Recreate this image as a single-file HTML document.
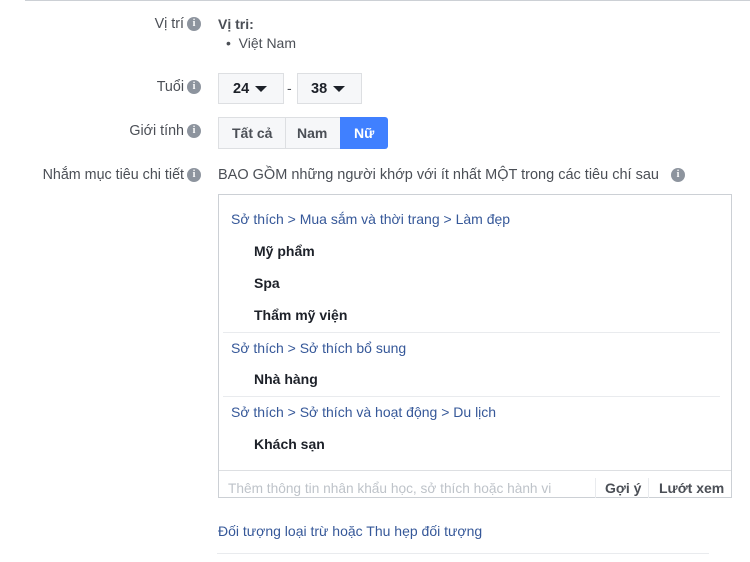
<!DOCTYPE html>
<html><head><meta charset="utf-8"><style>
body{margin:0;width:750px;height:562px;background:#fff;font-family:"Liberation Sans",Arial,sans-serif;font-size:14px;color:#4b4f56;position:relative;overflow:hidden}
.a{position:absolute;white-space:nowrap}
.lbl{position:absolute;right:566px;color:#4b4f56;font-size:14.3px}
.ic{position:absolute;left:187px;width:14px;height:14px;border-radius:50%;background:#8d949e;color:#fff;font-size:10px;font-weight:bold;text-align:center;line-height:14px;font-family:"Liberation Serif",serif}
.box{position:absolute;border:1px solid #dddfe2;background:#f6f7f9;box-sizing:border-box}
.bl{color:#365899}
.b{font-weight:bold;color:#1d2129}
.ar{display:inline-block;width:0;height:0;border-left:6px solid transparent;border-right:6px solid transparent;border-top:6px solid #1d2129;vertical-align:middle;margin-left:6px}
</style></head><body>
<div class="a" style="left:25px;top:0;width:725px;height:1px;background:#ccd0d5"></div>
<div class="lbl" style="top:16px">Vị trí</div><div class="ic" style="top:17px">i</div>
<div class="a b" style="left:218px;top:16px;color:#4b4f56">Vị tri:</div>
<div class="a" style="left:226px;top:35px">•&nbsp; Việt Nam</div>
<div class="lbl" style="top:79px">Tuổi</div><div class="ic" style="top:80px">i</div>
<div class="box" style="left:218px;top:73px;width:66px;height:31px"></div>
<div class="a b" style="left:233px;top:81px;font-size:14.5px">24<span class="ar"></span></div>
<div class="a" style="left:287px;top:80px">-</div>
<div class="box" style="left:297px;top:73px;width:65px;height:31px"></div>
<div class="a b" style="left:311px;top:81px;font-size:14.5px">38<span class="ar"></span></div>
<div class="lbl" style="top:123px">Giới tính</div><div class="ic" style="top:124px">i</div>
<div class="box" style="left:218px;top:117px;width:68px;height:32px"></div>
<div class="box" style="left:285px;top:117px;width:56px;height:32px"></div>
<div class="a" style="left:340px;top:117px;width:48px;height:32px;background:#4080ff;border-radius:0 3px 3px 0"></div>
<div class="a b" style="left:232px;top:125px;color:#4b4f56">Tất cả</div>
<div class="a b" style="left:297px;top:125px;color:#4b4f56">Nam</div>
<div class="a b" style="left:354px;top:125px;color:#fff">Nữ</div>
<div class="lbl" style="top:167px">Nhắm mục tiêu chi tiết</div><div class="ic" style="top:168px">i</div>
<div class="a" style="left:218px;top:167px;font-size:14.5px">BAO GỒM những người khớp với ít nhất MỘT trong các tiêu chí sau</div>
<div class="ic" style="left:671px;top:168px">i</div>
<div class="a" style="left:218px;top:194px;width:514px;height:304px;border:1px solid #ccd0d5;box-sizing:border-box"></div>
<div class="a" style="left:219px;top:470px;width:512px;height:1px;background:#dddfe2"></div>
<div class="a" style="left:223px;top:332px;width:497px;height:1px;background:#e9ebee"></div>
<div class="a" style="left:223px;top:396px;width:497px;height:1px;background:#e9ebee"></div>
<div class="a bl" style="left:231px;top:211px">Sở thích &gt; Mua sắm và thời trang &gt; Làm đẹp</div>
<div class="a b" style="left:254px;top:243px">Mỹ phẩm</div>
<div class="a b" style="left:254px;top:275px">Spa</div>
<div class="a b" style="left:254px;top:307px">Thẩm mỹ viện</div>
<div class="a bl" style="left:231px;top:340px">Sở thích &gt; Sở thích bổ sung</div>
<div class="a b" style="left:254px;top:371px">Nhà hàng</div>
<div class="a bl" style="left:231px;top:404px">Sở thích &gt; Sở thích và hoạt động &gt; Du lịch</div>
<div class="a b" style="left:254px;top:436px">Khách sạn</div>
<div class="a" style="left:228px;top:481px;color:#bec3c9;font-size:13.7px">Thêm thông tin nhân khẩu học, sở thích hoặc hành vi</div>
<div class="a" style="left:595px;top:478px;width:1px;height:20px;background:#e9ebee"></div>
<div class="a" style="left:648px;top:478px;width:1px;height:20px;background:#e9ebee"></div>
<div class="a b" style="left:605px;top:480px;color:#4b4f56">Gợi ý</div>
<div class="a b" style="left:659px;top:480px;color:#4b4f56">Lướt xem</div>
<div class="a bl" style="left:218px;top:523px">Đối tượng loại trừ hoặc Thu hẹp đối tượng</div>
<div class="a" style="left:217px;top:553px;width:492px;height:1px;background:#e9ebee"></div>
</body></html>
